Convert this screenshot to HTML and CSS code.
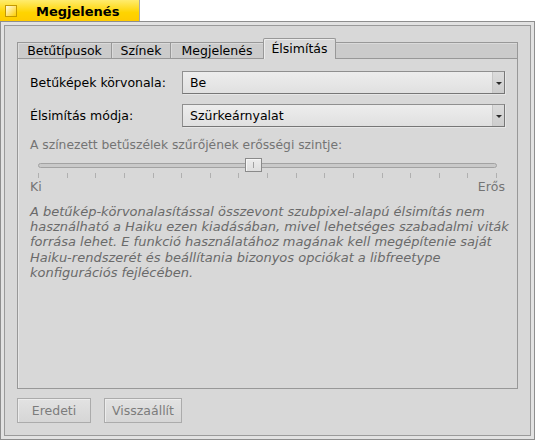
FILE: index.html
```html
<!DOCTYPE html>
<html lang="hu">
<head>
<meta charset="utf-8">
<title>Megjelenés</title>
<link rel="stylesheet" href="styles.css">
</head>
<body>
<div class="titlebar">
  <div class="title-tab">
    <span class="close-box"></span>
    <span class="title">Megjelenés</span>
  </div>
</div>
<div class="window">
  <div class="content">
    <div class="tabview">
      <div class="tabs">
        <div class="tab tab-fonts">Betűtípusok</div>
        <div class="tab tab-colors">Színek</div>
        <div class="tab tab-look">Megjelenés</div>
        <div class="tab active tab-aa">Élsimítás</div>
        <div class="tab-filler"></div>
      </div>
      <div class="panel">
        <div class="form">
          <label class="label">Betűképek körvonala:</label>
          <div class="menufield"><span class="menu-text">Be</span><span class="menu-arrow"><span class="tri"></span></span></div>
          <label class="label">Élsimítás módja:</label>
          <div class="menufield"><span class="menu-text">Szürkeárnyalat</span><span class="menu-arrow"><span class="tri"></span></span></div>
        </div>
        <div class="slider-label">A színezett betűszélek szűrőjének erősségi szintje:</div>
        <div class="slider">
          <div class="track"></div>
          <div class="thumb" style="left: 45%"><span class="grip"></span></div>
        </div>
        <div class="ticks">
          <span></span><span></span><span></span><span></span><span></span><span></span><span></span><span></span><span></span><span></span><span></span><span></span><span></span><span></span><span></span><span></span><span></span>
        </div>
        <div class="limits"><span>Ki</span><span>Erős</span></div>
        <p class="note">A betűkép-körvonalasítással összevont szubpixel-alapú élsimítás nem<br>használható a Haiku ezen kiadásában, mivel lehetséges szabadalmi viták<br>forrása lehet. E funkció használatához magának kell megépítenie saját<br>Haiku-rendszerét és beállítania bizonyos opciókat a libfreetype<br>konfigurációs fejlécében.</p>
      </div>
    </div>
    <div class="buttons">
      <button class="btn" disabled>Eredeti</button>
      <button class="btn" disabled>Visszaállít</button>
    </div>
  </div>
</div>
</body>
</html>
```
FILE: styles.css
```css
html, body {
  margin: 0;
  padding: 0;
}
body {
  width: 535px;
  height: 440px;
  overflow: hidden;
  background: #ffffff;
  font-family: "DejaVu Sans", "Liberation Sans", sans-serif;
  font-size: 12.5px;
  color: #000;
}
.titlebar {
  height: 21px;
  display: flex;
}
.title-tab {
  width: 140px;
  height: 21px;
  box-sizing: border-box;
  border-right: 1px solid #a8a8a8;
  background: linear-gradient(#ffec6e, #ffd400 60%, #ffcb00);
  display: flex;
  align-items: center;
  padding-left: 5px;
}
.close-box {
  width: 12px;
  height: 12px;
  box-sizing: border-box;
  border: 1px solid #c49800;
  background: linear-gradient(135deg, #fffce6 0%, #ffe680 45%, #ffcf00 100%);
}
.title {
  margin-left: 19px;
  font-weight: bold;
  font-size: 13px;
  line-height: 21px;
  padding-top: 1px;
}
.window {
  height: 419px;
  box-sizing: border-box;
  border: 1px solid #8e8e8e;
  background: #e2e2e2;
  padding: 3px;
}
.content {
  height: 100%;
  box-sizing: border-box;
  border: 1px solid #9a9a9a;
  background: #d8d8d8;
  padding: 12px;
  display: flex;
  flex-direction: column;
}
.tabview {
  flex: 1;
  display: flex;
  flex-direction: column;
}
.tabs {
  height: 21px;
  display: flex;
  align-items: flex-end;
}
.tab {
  height: 17px;
  box-sizing: border-box;
  border-top: 1px solid #989898;
  border-left: 1px solid #989898;
  border-bottom: 1px solid #989898;
  background: #cbcbcb;
  box-shadow: inset 1px 1px 0 #dadada;
  display: flex;
  align-items: center;
  justify-content: center;
  white-space: nowrap;
  line-height: 15px;
}
.tab-fonts { width: 94px; }
.tab-colors { width: 59px; }
.tab-look { width: 93px; }
.tab-aa { width: 73px; }
.tab.active {
  height: 21px;
  border-bottom: none;
  border-right: 1px solid #989898;
  border-radius: 2px 2px 0 0;
  background: #d8d8d8;
  box-shadow: inset 1px 1px 0 #ececec;
  padding-bottom: 2px;
}
.tab-filler {
  flex: 1;
  height: 17px;
  box-sizing: border-box;
  border-top: 1px solid #989898;
  border-right: 1px solid #989898;
  border-bottom: 1px solid #989898;
  background: #cbcbcb;
  box-shadow: inset 0 1px 0 #dadada;
}
.panel {
  flex: 1;
  border: 1px solid #989898;
  border-top: none;
  background: #d8d8d8;
  padding: 12px 12px 0 12px;
  box-shadow: inset 1px 0 0 #e6e6e6;
}
.form {
  display: grid;
  grid-template-columns: 152px 1fr;
  row-gap: 10px;
  align-items: center;
}
.label {
  line-height: 15px;
  white-space: nowrap;
}
.menufield {
  height: 23px;
  box-sizing: border-box;
  border: 1px solid #8f8f8f;
  border-right-color: #767676;
  border-bottom-color: #767676;
  background: linear-gradient(#ededed, #e0e0e0);
  box-shadow: 1px 1px 0 #e6e6e6;
  display: flex;
  align-items: stretch;
}
.menu-text {
  flex: 1;
  padding-left: 7px;
  display: flex;
  align-items: center;
  line-height: 15px;
}
.menu-arrow {
  width: 11px;
  border-left: 1px solid #c6c6c6;
  background: linear-gradient(#dcdcdc, #cdcdcd);
  display: flex;
  align-items: center;
  justify-content: center;
}
.tri {
  width: 0;
  height: 0;
  border-left: 3px solid transparent;
  border-right: 3px solid transparent;
  border-top: 3px solid #2a2a2a;
  margin-top: 1px;
}
.slider-label {
  margin-top: 11px;
  line-height: 15px;
  color: #747474;
  white-space: nowrap;
  font-size: 12.3px;
}
.slider {
  position: relative;
  margin: 5px 8px 0 8px;
  height: 14px;
  display: flex;
  align-items: center;
}
.track {
  flex: 1;
  height: 5px;
  box-sizing: border-box;
  border: 1px solid #a2a2a2;
  border-radius: 3px;
  background: #c9c9c9;
  margin-top: 1px;
}
.thumb {
  position: absolute;
  top: 0;
  width: 17px;
  height: 14px;
  box-sizing: border-box;
  border: 1px solid #8a8a8a;
  background: linear-gradient(#ececec, #dedede);
  box-shadow: inset 1px 1px 0 #f6f6f6;
  display: flex;
  align-items: center;
  justify-content: center;
}
.grip {
  width: 1px;
  height: 6px;
  background: #a0a0a0;
}
.ticks {
  margin: 1px 8px 0 8px;
  height: 5px;
  display: flex;
  justify-content: space-between;
}
.ticks span {
  width: 1px;
  height: 5px;
  background: #b0b0b0;
}
.limits {
  display: flex;
  justify-content: space-between;
  line-height: 15px;
  color: #747474;
  margin-top: 1px;
}
.note {
  margin: 10px 0 0 0;
  font-style: italic;
  font-size: 13px;
  line-height: 15.2px;
  color: #6a6a6a;
  white-space: nowrap;
}
.buttons {
  margin-top: 9px;
  display: flex;
  gap: 13px;
}
.btn {
  height: 25px;
  min-width: 74px;
  box-sizing: border-box;
  border: 1px solid #ababab;
  border-radius: 0;
  background: linear-gradient(#e2e2e2, #d6d6d6);
  box-shadow: inset 1px 1px 0 #ececec;
  color: #7c7c7c;
  font-family: "DejaVu Sans", "Liberation Sans", sans-serif;
  font-size: 12.5px;
  padding: 0 7px;
  margin: 0;
}
```
